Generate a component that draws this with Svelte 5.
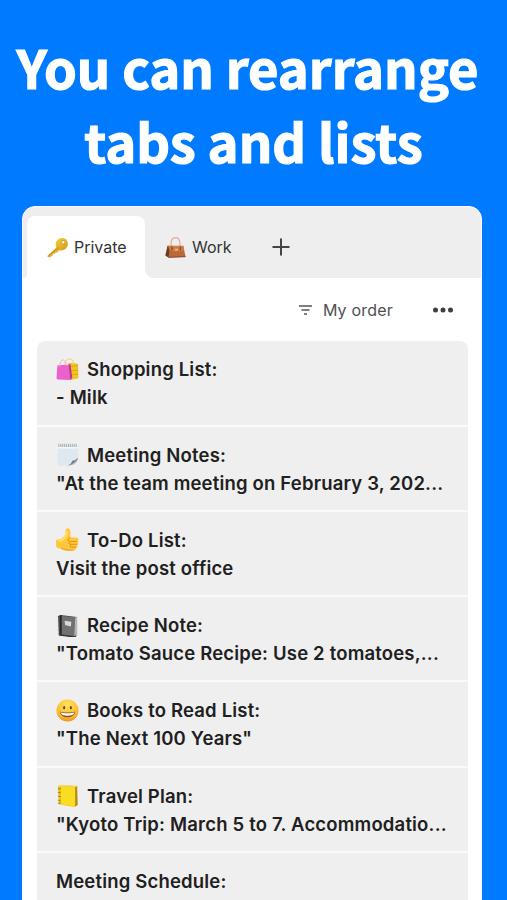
<script>
  const notes = [
    { icon: 'bags', title: 'Shopping List:', text: '- Milk' },
    { icon: 'notepad', title: 'Meeting Notes:', text: '"At the team meeting on February 3, 202...' },
    { icon: 'thumb', title: 'To-Do List:', text: 'Visit the post office' },
    { icon: 'book', title: 'Recipe Note:', text: '"Tomato Sauce Recipe: Use 2 tomatoes,...' },
    { icon: 'smile', title: 'Books to Read List:', text: '"The Next 100 Years"' },
    { icon: 'ledger', title: 'Travel Plan:', text: '"Kyoto Trip: March 5 to 7. Accommodatio...' },
    { icon: '', title: 'Meeting Schedule:', text: '' }
  ];
</script>

{#snippet icon(name)}
  <svg class="emoji" viewBox="0 0 24 24" aria-hidden="true">
    {#if name === 'bags'}
      <path d="M9 7C10-1 17-1 19 6" fill="none" stroke="#f5c979" stroke-width="1" />
      <path d="M13 5l10 1 .5 15-8 2-3-2z" fill="#f2c324" />
      <path d="M15 9l8-1M15 13h8M15 17h8" stroke="#dda51c" stroke-width="1" />
      <path d="M1.500 7.500L13 7l2 16-13-.5-1.500-1z" fill="#ec60cd" />
      <path d="M13 7l2 16 2-2.500L15 6z" fill="#b83691" />
      <path d="M4 9C4 1 10-1 11 8" fill="none" stroke="#edb2b8" stroke-width="1" />
    {:else if name === 'notepad'}
      <path d="M2 2h21v15l-7 6.500H1.500z" fill="#dfe8ee" />
      <path d="M2 5h21" stroke="#f5f8f9" stroke-width="1.500" />
      <path d="M2.500 2.500h20" stroke="#a9aeb2" stroke-width="3.500" stroke-dasharray="1 1" />
      <path d="M12 23.500c3-1 4-2 5-5 2 0 4-1 6-3-1 5-5 8-11 8z" fill="#787f86" />
      <path d="M15 23c3-1 5-3 7.500-6-.5 4-3 6-7.500 6z" fill="#c2c8cc" />
    {:else if name === 'thumb'}
      <path d="M1 12c3 0 6-1 8-4 1-2 1-4 1-6 1-3 5-2 5 2v6h6c3 0 3 3 1.500 4 1.500 1 1 3 0 3.500.5 2-.5 3-1.500 3 0 2-1 3-3 3-6 1-10 0-13-2l-4-1c-2-3-2-6 0-8.500z" fill="#ffc83b" />
      <path d="M3 13c5 1 6-3 8-5V3" fill="none" stroke="#ffe16b" stroke-width="2" />
      <path d="M15 10c-3 1-3 4 0 4h7m-7 0c-2 1-2 3 0 3h7m-6 0c-2 1-1 3 0 3h5" fill="none" stroke="#dd8618" stroke-width=".9" />
      <path d="M5 21c4 2 8 2 13 2" fill="none" stroke="#e89a20" stroke-width="1" />
    {:else if name === 'book'}
      <path d="M2 2l3-1 17 2v19l-3 2L3 22z" fill="#4b4b4c" />
      <path d="M6 2l14 1.500-1 19.500-13-2z" fill="#717171" />
      <path d="M20 3.500l2-.5v19l-3 1z" fill="#b6b6b6" />
      <path d="M5 1v20" stroke="#252526" stroke-width="1.500" />
      <path d="M2.500 4v17" stroke="#919191" stroke-width="1" stroke-dasharray="1.500 2.500" />
      <path d="M9 7l7 1-.5 5-6-1.500z" fill="#d9d9d6" />
      <path d="M3 22l16 2 2-1" fill="none" stroke="#202020" />
    {:else if name === 'smile'}
      <defs>
        <radialGradient id="face" cx=".5" cy=".25" r=".8">
          <stop stop-color="#ffe35a" />
          <stop offset=".7" stop-color="#fcb82d" />
          <stop offset="1" stop-color="#e58a20" />
        </radialGradient>
      </defs>
      <circle cx="12" cy="12" r="11.500" fill="url(#face)" />
      <ellipse cx="8.500" cy="9" rx="1.100" ry="1.700" fill="#654027" />
      <ellipse cx="15.500" cy="9" rx="1.100" ry="1.700" fill="#654027" />
      <path d="M4 13c4 1.300 12 1.300 16 0-.5 8-15.500 8-16 0z" fill="#805326" />
      <path d="M4.700 13.800c4 1.300 10.600 1.300 14.600 0-.5 5-14 5-14.600 0z" fill="#fffbe9" />
    {:else if name === 'ledger'}
      <path d="M2 2l4-1 16 1 .5 20-3 2L3 21z" fill="#e9be18" />
      <path d="M5 3l15 .5v20L5 21z" fill="#fadd22" />
      <path d="M20 3l2-1 .5 20-2.500 1.500z" fill="#b7881f" />
      <path d="M2 2.500l4-1 15 1" fill="none" stroke="#f5df71" stroke-width="1.500" />
      <path d="M2 5h3M2 9h3M2 13h3M2 17h3M2 20h3" stroke="#a48218" stroke-width="1" />
    {:else if name === 'key'}
      <defs>
        <linearGradient id="gold" x1="0" y1="0" x2="1" y2="1">
          <stop stop-color="#ffe34b" />
          <stop offset="1" stop-color="#c98a0c" />
        </linearGradient>
      </defs>
      <path d="M10.500 12C8.500 6 12 1 17.500 1c6 0 8 7 5 11-2 3-5.500 4-8.500 3l-3 3-1-.5-1 2-2-.3-1 2.300-3 2L0 22z" fill="url(#gold)" />
      <path d="M1.500 22L13 12" stroke="#b47b18" stroke-width="1" />
      <circle cx="18.500" cy="6" r="2" fill="#fff8d3" stroke="#be8b17" stroke-width=".8" />
    {:else if name === 'handbag'}
      <path d="M7 12V6C8-1 16-1 17 6v7" fill="none" stroke="#e3ab98" stroke-width="1.400" />
      <path d="M3 10l18 .5 2.500 12L4 23.500.5 21z" fill="#bc6736" />
      <path d="M3 10L.5 21 4 23.500 5.500 11z" fill="#673c2a" />
      <path d="M3.500 10h17.500l1 5c-5 2-12 2-17 0z" fill="#cc7c49" />
      <path d="M8 11v4M17.500 11v4" stroke="#7c432d" stroke-width="1.300" />
      <path d="M11.500 13.500h3v2h-3z" fill="#edc080" />
      <path d="M4 23.300l19.500-.8" stroke="#7b3c25" />
    {/if}
  </svg>
{/snippet}

<div class="screen">
  <h1>You can rearrange&nbsp;<br />tabs and lists</h1>

  <main>
    <nav>
      <div class="tab active">{@render icon('key')}<span>Private</span></div>
      <div class="tab work">{@render icon('handbag')}<span>Work</span></div>
      <svg class="plus" viewBox="0 0 18 18"><path d="M9 .5v17M.5 9h17" stroke="#444" stroke-width="2" /></svg>
    </nav>

    <div class="toolbar">
      <svg class="filter" viewBox="0 0 13 10"><path d="M0 1h13M2.500 5h8M5 9h3" stroke="#555" stroke-width="1.300" /></svg>
      <span>My order</span>
      <svg class="dots" viewBox="0 0 22 6"><g fill="#404040"><circle cx="3.500" cy="3" r="2.500" /><circle cx="11" cy="3" r="2.500" /><circle cx="18.500" cy="3" r="2.500" /></g></svg>
    </div>

    <div class="list">
      {#each notes as note}
        <article>
          <div class="line">{#if note.icon}{@render icon(note.icon)}{/if}<span>{note.title}</span></div>
          <div class="line">{note.text}</div>
        </article>
      {/each}
    </div>
  </main>
</div>

<style>
  :global(body) {
    overflow: hidden;
  }
  .screen {
    box-sizing: border-box;
    width: 507px;
    height: 900px;
    overflow: hidden;
    padding: 30px 25px 0 22px;
    background: #007aff;
    font-family: Inter, 'Liberation Sans', sans-serif;
  }
  h1 {
    margin: 0 -25px 0 -22px;
    height: 176px;
    color: #fff;
    font: 700 52.5px/73.5px 'Noto Sans CJK JP', sans-serif;
    -webkit-text-stroke: 1.2px #fff;
    text-align: center;
    white-space: nowrap;
  }
  main {
    box-sizing: border-box;
    height: 710px;
    border: 1px solid #fff;
    border-radius: 13px;
    background: #fff;
    overflow: hidden;
  }
  nav {
    box-sizing: border-box;
    display: flex;
    align-items: center;
    height: 71px;
    padding: 9px 4px 0;
    background: radial-gradient(circle at 0 0, transparent 4px, #fff 4.500px) 0 100% / 4px 4px no-repeat #eee;
    color: #333;
    font-size: 16px;
  }
  .tab {
    box-sizing: border-box;
    display: flex;
    align-items: center;
    height: 62px;
    gap: 6px;
  }
  .active {
    width: 118px;
    padding-left: 20px;
    border-radius: 8px 8px 0 0;
    background: #fff;
  }
  .work {
    padding-left: 20px;
    background: radial-gradient(circle at 100% 0, transparent 8.500px, #fff 9.500px) 0 100% / 9px 9px no-repeat;
  }
  .tab .emoji {
    width: 21px;
    height: 21px;
  }
  .emoji {
    width: 23px;
    height: 23px;
    flex-shrink: 0;
  }
  .plus {
    width: 18px;
    height: 18px;
    margin-left: 40px;
  }
  .toolbar {
    display: flex;
    align-items: center;
    justify-content: flex-end;
    height: 63.4px;
    padding-right: 27px;
    color: #505050;
    font-size: 16px;
    letter-spacing: 0.2px;
  }
  .filter {
    width: 13px;
    height: 10px;
    margin-right: 11px;
  }
  .dots {
    width: 22px;
    height: 6px;
    margin-left: 39px;
  }
  .list {
    margin: 0 13px 0 14px;
    border-radius: 8px 8px 0 0;
    overflow: hidden;
  }
  article {
    box-sizing: border-box;
    height: 85.25px;
    padding: 14px 0 0 19px;
    border-bottom: 2px solid #fafafa;
    background: #efefef;
    color: #202020;
    font-size: 18.5px;
    font-weight: 600;
    letter-spacing: 0.18px;
  }
  .line {
    display: flex;
    align-items: center;
    gap: 8px;
    height: 28px;
    white-space: pre;
  }
</style>
